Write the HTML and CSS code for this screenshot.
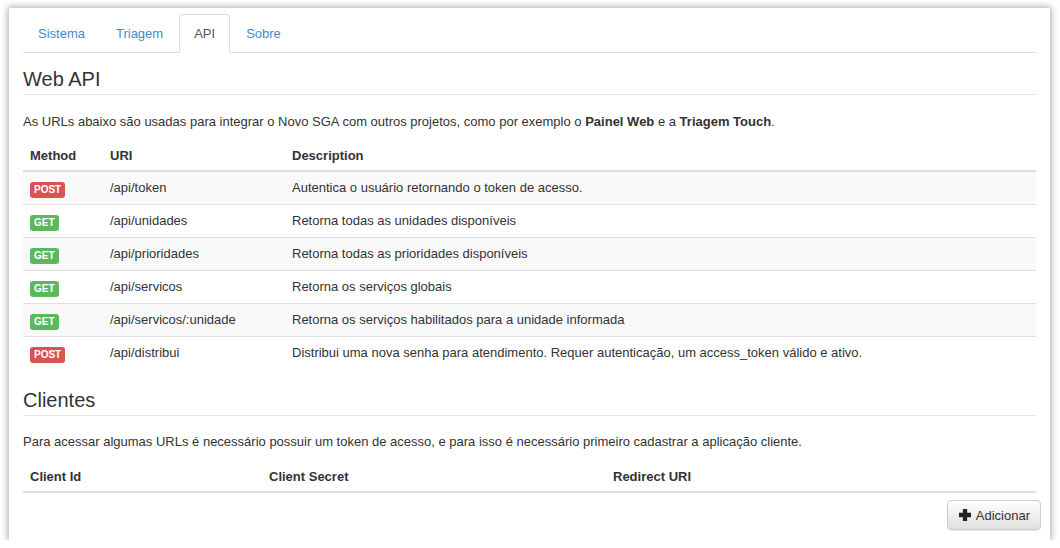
FILE: index.html
```html
<!DOCTYPE html>
<html lang="pt">
<head>
<meta charset="utf-8">
<title>API</title>
<link rel="stylesheet" href="styles.css">
</head>
<body>
<div class="panel">
  <ul class="tabs">
    <li><a href="#">Sistema</a></li>
    <li><a href="#">Triagem</a></li>
    <li class="active"><a href="#">API</a></li>
    <li><a href="#">Sobre</a></li>
  </ul>

  <h3 class="section-title">Web API</h3>
  <p>As URLs abaixo são usadas para integrar o Novo SGA com outros projetos, como por exemplo o <strong>Painel Web</strong> e a <strong>Triagem Touch</strong>.</p>
  <table class="table striped api">
    <thead>
      <tr><th class="c-method">Method</th><th class="c-uri">URI</th><th>Description</th></tr>
    </thead>
    <tbody>
      <tr><td><span class="label post">POST</span></td><td>/api/token</td><td>Autentica o usuário retornando o token de acesso.</td></tr>
      <tr><td><span class="label get">GET</span></td><td>/api/unidades</td><td>Retorna todas as unidades disponíveis</td></tr>
      <tr><td><span class="label get">GET</span></td><td>/api/prioridades</td><td>Retorna todas as prioridades disponíveis</td></tr>
      <tr><td><span class="label get">GET</span></td><td>/api/servicos</td><td>Retorna os serviços globais</td></tr>
      <tr><td><span class="label get">GET</span></td><td>/api/servicos/:unidade</td><td>Retorna os serviços habilitados para a unidade informada</td></tr>
      <tr><td><span class="label post">POST</span></td><td>/api/distribui</td><td>Distribui uma nova senha para atendimento. Requer autenticação, um access_token válido e ativo.</td></tr>
    </tbody>
  </table>

  <h3 class="section-title second">Clientes</h3>
  <p>Para acessar algumas URLs é necessário possuir um token de acesso, e para isso é necessário primeiro cadastrar a aplicação cliente.</p>
  <table class="table clients">
    <thead>
      <tr><th class="c-id">Client Id</th><th class="c-secret">Client Secret</th><th>Redirect URI</th></tr>
    </thead>
    <tbody></tbody>
  </table>
  <div class="actions">
    <button class="btn" type="button"><svg class="plus" viewBox="0 0 14 14" width="12" height="12"><path d="M4.5 0h5v4.5H14v5H9.5V14h-5V9.5H0v-5h4.5z" fill="#222"/></svg>Adicionar</button>
  </div>
</div>
</body>
</html>
```

FILE: styles.css
```css
* { box-sizing: border-box; }
html, body { margin: 0; padding: 0; background: #fff; }
body {
  font-family: "Liberation Sans", Arial, sans-serif;
  font-size: 13px;
  line-height: 18.57px;
  color: #333;
}
.panel {
  margin: 8px 10px 0 9px;
  width: 1041px;
  height: 532px;
  padding: 6px 14px 0 14px;
  background: #fff;
  box-shadow: 0 0 7px 1px rgba(0,0,0,0.35);
}
.tabs {
  list-style: none;
  margin: 0;
  padding: 0;
  display: flex;
  border-bottom: 1px solid #ddd;
}
.tabs li { margin-bottom: -1px; }
.tabs a {
  display: block;
  padding: 10px 14px;
  line-height: 17px;
  margin-right: 1px;
  color: #428bca;
  text-decoration: none;
  border: 1px solid transparent;
  border-radius: 4px 4px 0 0;
}
.tabs .active a {
  color: #555;
  background: #fff;
  border-color: #ddd #ddd transparent #ddd;
}
.section-title {
  font-size: 20px;
  font-weight: normal;
  line-height: 22px;
  margin: 15px 0 0;
  padding-bottom: 4px;
  border-bottom: 1px solid #e5e5e5;
}
.section-title.second { margin-top: 20px; }
p { margin: 18px 0 9px; }
.section-title.second + p { margin-top: 17px; }
.table {
  width: 100%;
  border-collapse: collapse;
  border-spacing: 0;
}
.table th, .table td {
  text-align: left;
  padding: 8px 7px;
  line-height: 16px;
  height: 32px;
  vertical-align: middle;
}
.table th {
  font-weight: bold;
  border-bottom: 2px solid #ddd;
  padding-top: 7px;
  padding-bottom: 6px;
  height: 30px;
}
.table td { border-top: 1px solid #ddd; }
.table tbody tr:first-child td { border-top: 0; }
.striped tbody tr:nth-child(odd) td { background: #f9f9f9; }
.api .c-method { width: 80px; }
.api .c-uri { width: 182px; }
.clients { margin-top: 11px; }
.clients .c-id { width: 239px; }
.clients .c-secret { width: 344px; }
.label {
  display: inline-block;
  font-size: 10px;
  font-weight: bold;
  line-height: 10px;
  padding: 3px 4px;
  color: #fff;
  border-radius: 3px;
  vertical-align: top;
  position: relative;
  top: 2px;
}
.label.post { background: #d9534f; }
.label.get { background: #5cb85c; }
.actions {
  display: flex;
  justify-content: flex-end;
  margin-top: 7px;
  margin-right: -5px;
}
.btn {
  display: inline-flex;
  align-items: center;
  gap: 5px;
  height: 30px;
  padding: 0 10px 0 11px;
  font-family: "Liberation Sans", Arial, sans-serif;
  font-size: 13px;
  color: #333;
  background: linear-gradient(to bottom, #fff 0%, #e0e0e0 100%);
  border: 1px solid #ccc;
  border-radius: 4px;
  box-shadow: inset 0 1px 0 rgba(255,255,255,.15), 0 1px 1px rgba(0,0,0,.075);
}
.plus { display: block; }
```
